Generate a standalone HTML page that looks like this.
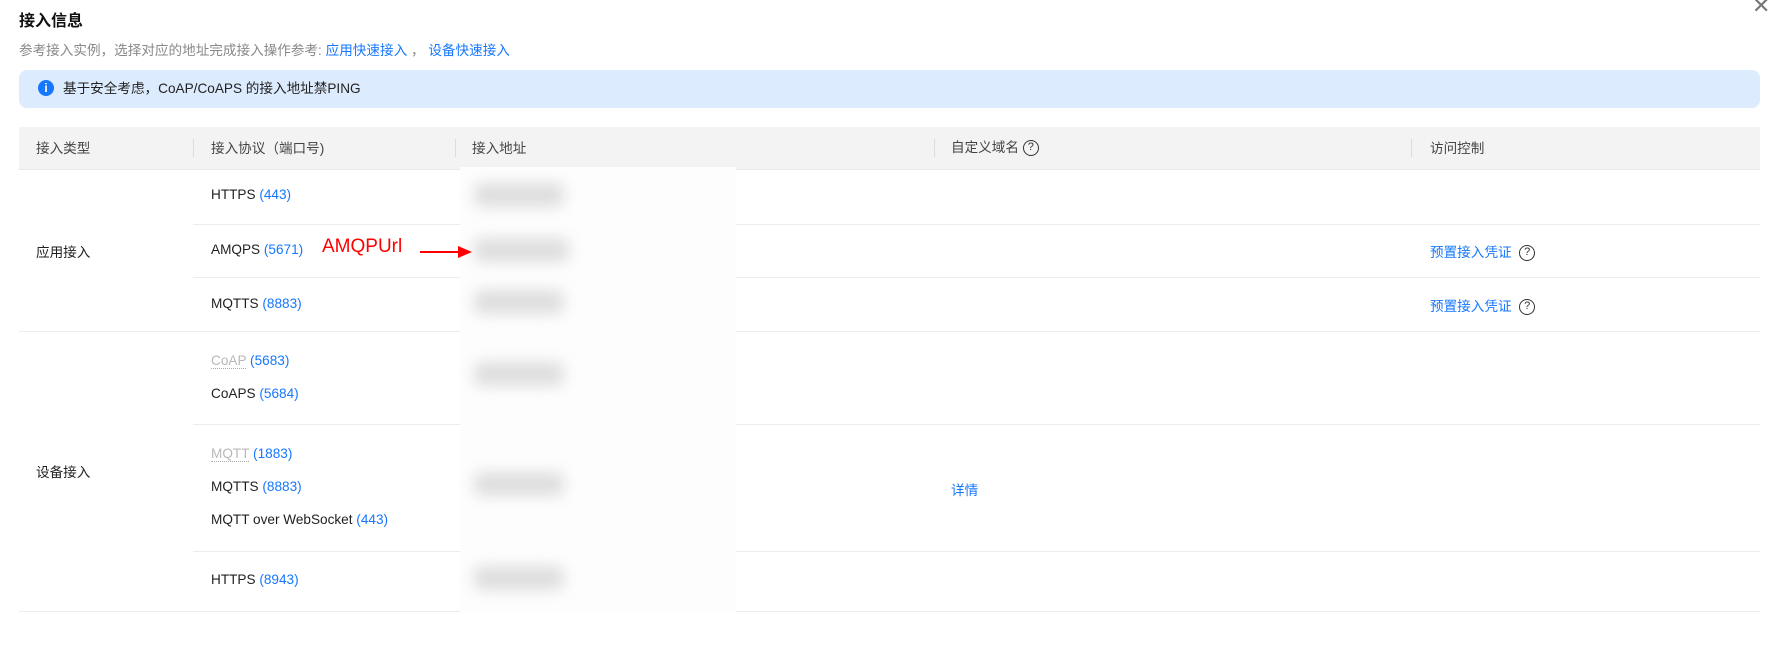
<!DOCTYPE html>
<html><head><meta charset="utf-8"><style>
*{margin:0;padding:0;box-sizing:border-box}
body{width:1779px;height:654px;background:#fff;position:relative;overflow:hidden;font-family:"Liberation Sans","Noto Sans CJK SC",sans-serif;font-size:13.6px;color:#1f1f1f}
.a{position:absolute;white-space:nowrap}
.b{color:#1677ff}
.g{color:#b8b8b8;border-bottom:1px dotted #aaa}
.ln{position:absolute;height:1px;background:#ececec}
.q{display:inline-block;width:16px;height:16px;border:1.3px solid #333;border-radius:50%;font-size:11px;text-align:center;line-height:13px;color:#333;vertical-align:middle}
.blob{position:absolute;background:#dedede;filter:blur(7px);border-radius:8px}
</style></head><body>
<div class="a" style="left:19px;top:7px;font-size:16px;font-weight:bold;color:#111">接入信息</div>
<div class="a" style="left:1752px;top:-7px;font-size:22px;color:#777">✕</div>
<div class="a" style="left:19px;top:39px;color:#888">参考接入实例，选择对应的地址完成接入操作参考: <span class="b">应用快速接入</span> ， <span class="b">设备快速接入</span></div>
<div class="a" style="left:19px;top:70px;width:1741px;height:38px;background:#dcebfd;border-radius:8px"></div>
<div class="a" style="left:38px;top:80px;width:16px;height:16px;border-radius:50%;background:#1677ff;color:#fff;font-size:12px;font-weight:bold;text-align:center;line-height:16px">i</div>
<div class="a" style="left:63px;top:77px;color:#222">基于安全考虑，CoAP/CoAPS 的接入地址禁PING</div>
<div class="a" style="left:19px;top:127px;width:1741px;height:43px;background:#f3f3f3;border-bottom:1px solid #e8e8e8"></div>
<div class="a" style="left:193px;top:139px;width:1px;height:18px;background:#ddd"></div>
<div class="a" style="left:455px;top:139px;width:1px;height:18px;background:#ddd"></div>
<div class="a" style="left:934px;top:139px;width:1px;height:18px;background:#ddd"></div>
<div class="a" style="left:1411px;top:139px;width:1px;height:18px;background:#ddd"></div>
<div class="a" style="left:36px;top:137px;color:#444">接入类型</div>
<div class="a" style="left:211px;top:137px;color:#444">接入协议（端口号)</div>
<div class="a" style="left:472px;top:137px;color:#444">接入地址</div>
<div class="a" style="left:951px;top:136px;color:#444">自定义域名 <span class="q">?</span></div>
<div class="a" style="left:1430px;top:137px;color:#444">访问控制</div>
<div class="ln" style="left:193px;top:224px;width:1567px"></div>
<div class="ln" style="left:193px;top:277px;width:1567px"></div>
<div class="ln" style="left:19px;top:331px;width:1741px"></div>
<div class="ln" style="left:193px;top:424px;width:1567px"></div>
<div class="ln" style="left:193px;top:551px;width:1567px"></div>
<div class="ln" style="left:19px;top:611px;width:1741px"></div>
<div class="a" style="left:460px;top:167px;width:276px;height:445px;background:#fdfdfd"></div>
<div class="blob" style="left:474px;top:183px;width:90px;height:24px"></div>
<div class="blob" style="left:474px;top:238px;width:95px;height:24px"></div>
<div class="blob" style="left:474px;top:290px;width:90px;height:24px"></div>
<div class="blob" style="left:474px;top:362px;width:90px;height:24px"></div>
<div class="blob" style="left:474px;top:472px;width:90px;height:24px"></div>
<div class="blob" style="left:474px;top:566px;width:90px;height:24px"></div>
<div class="a" style="left:36px;top:241px">应用接入</div>
<div class="a" style="left:36px;top:461px">设备接入</div>
<div class="a" style="left:211px;top:187px">HTTPS <span class="b">(443)</span></div>
<div class="a" style="left:211px;top:242px">AMQPS <span class="b">(5671)</span></div>
<div class="a" style="left:211px;top:296px">MQTTS <span class="b">(8883)</span></div>
<div class="a" style="left:211px;top:353px"><span class="g">CoAP</span> <span class="b">(5683)</span></div>
<div class="a" style="left:211px;top:386px">CoAPS <span class="b">(5684)</span></div>
<div class="a" style="left:211px;top:446px"><span class="g">MQTT</span> <span class="b">(1883)</span></div>
<div class="a" style="left:211px;top:479px">MQTTS <span class="b">(8883)</span></div>
<div class="a" style="left:211px;top:512px">MQTT over WebSocket <span class="b">(443)</span></div>
<div class="a" style="left:211px;top:572px">HTTPS <span class="b">(8943)</span></div>
<div class="a" style="left:322px;top:236px;color:#f00;font-size:19px">AMQPUrl</div>
<svg class="a" style="left:418px;top:245px" width="56" height="14"><line x1="2" y1="7" x2="44" y2="7" stroke="#f00" stroke-width="2"/><polygon points="40,1 54,7 40,13" fill="#f00"/></svg>
<div class="a b" style="left:951px;top:479px">详情</div>
<div class="a" style="left:1430px;top:241px"><span class="b">预置接入凭证</span> &nbsp;<span class="q">?</span></div>
<div class="a" style="left:1430px;top:295px"><span class="b">预置接入凭证</span> &nbsp;<span class="q">?</span></div>
</body></html>
